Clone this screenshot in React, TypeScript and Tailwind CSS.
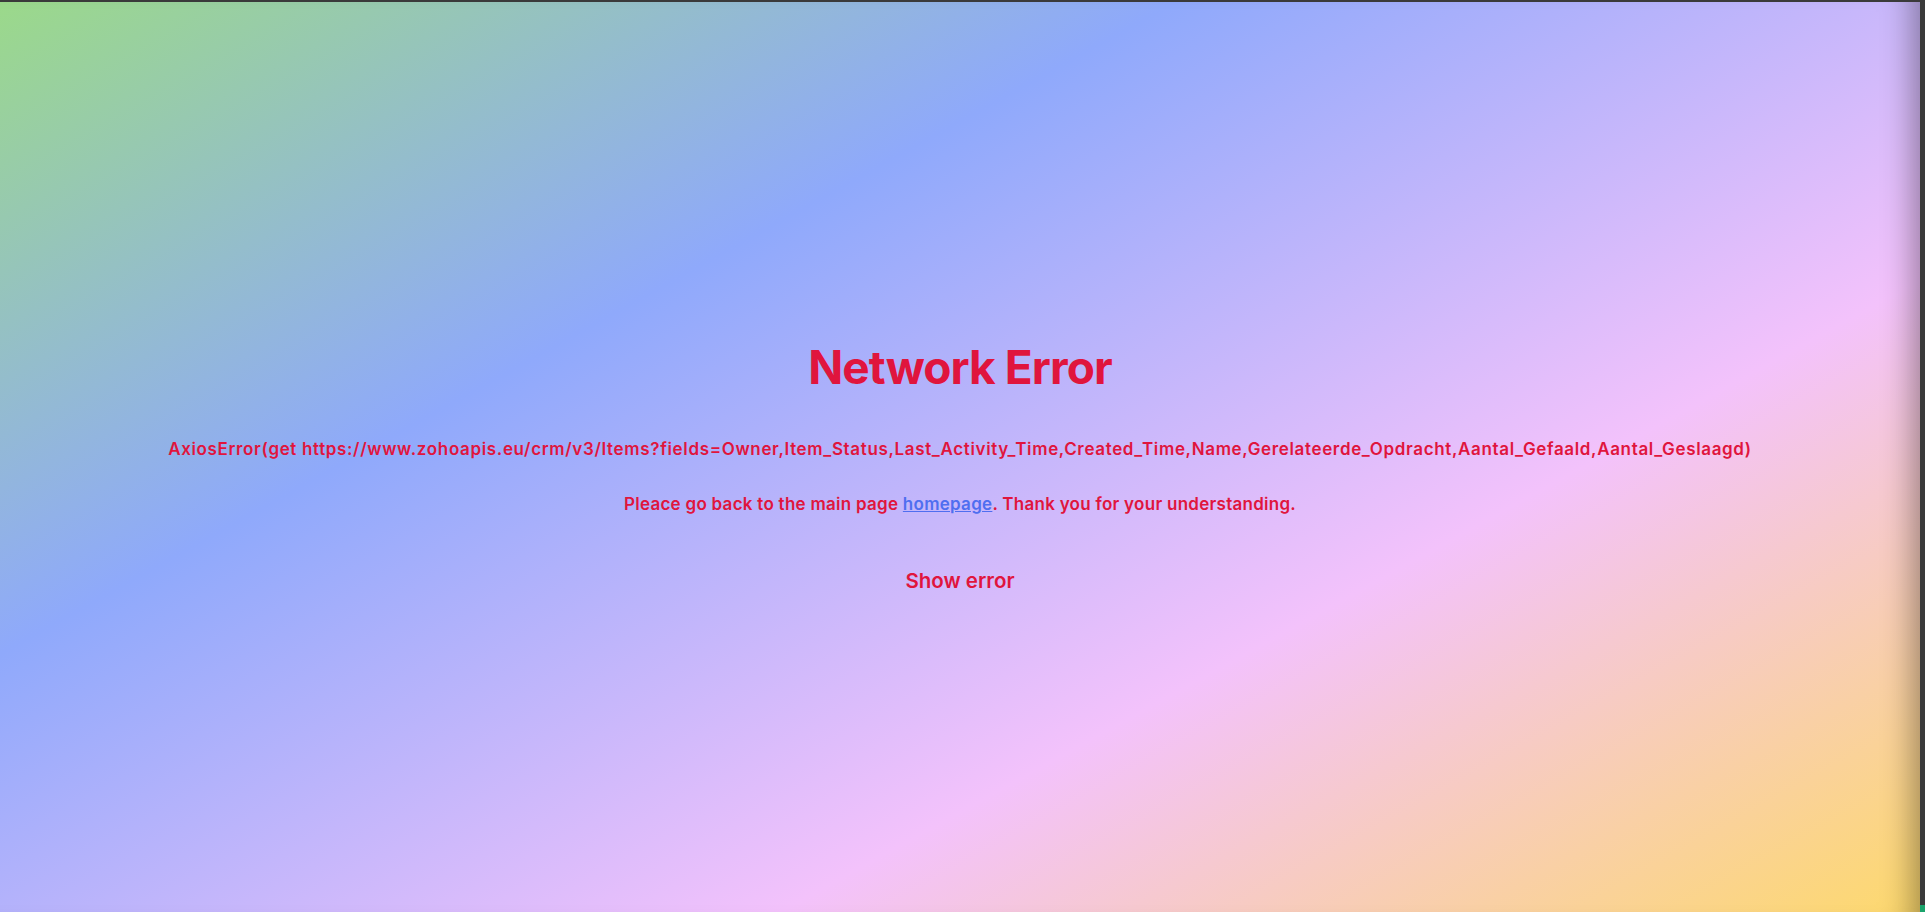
import React from "react";

const App = () => {
  return (
    <div className="flex flex-col w-full h-[912px] bg-[#3a3a3a] overflow-hidden">
      <div className="h-[2px] shrink-0" />
      <div className="flex flex-1">
        <main className="relative flex-1 flex flex-col items-center justify-center bg-[linear-gradient(151deg,#9bd98a_0%,#8fa9fb_33%,#f3c2fb_68%,#fdd96d_100%)] shadow-[inset_-34px_0_30px_-26px_rgba(0,0,0,0.35)] font-['Inter',sans-serif] text-[#e0153d] text-center pt-[26px]">
          <h1 className="text-[46px] font-bold tracking-[-0.02em] leading-none">Network Error</h1>
          <p className="mt-[47px] text-[17px] font-semibold tracking-[0.65px]">
            AxiosError(get https://www.zohoapis.eu/crm/v3/Items?fields=Owner,Item_Status,Last_Activity_Time,Created_Time,Name,Gerelateerde_Opdracht,Aantal_Gefaald,Aantal_Geslaagd)
          </p>
          <p className="mt-[30px] text-[17px] font-semibold tracking-[0.27px]">
            Pleace go back to the main page{" "}
            <a href="#" className="text-[#4f6ef0] underline">homepage</a>. Thank you for your understanding.
          </p>
          <button className="mt-[48px] text-[20.5px] font-semibold text-[#e0153d]">Show error</button>
        </main>
        <div className="w-[5px] shrink-0 flex flex-col justify-end">
          <div className="h-[7px] bg-[#1aa36b]" />
        </div>
      </div>
    </div>
  );
};

export default App;
